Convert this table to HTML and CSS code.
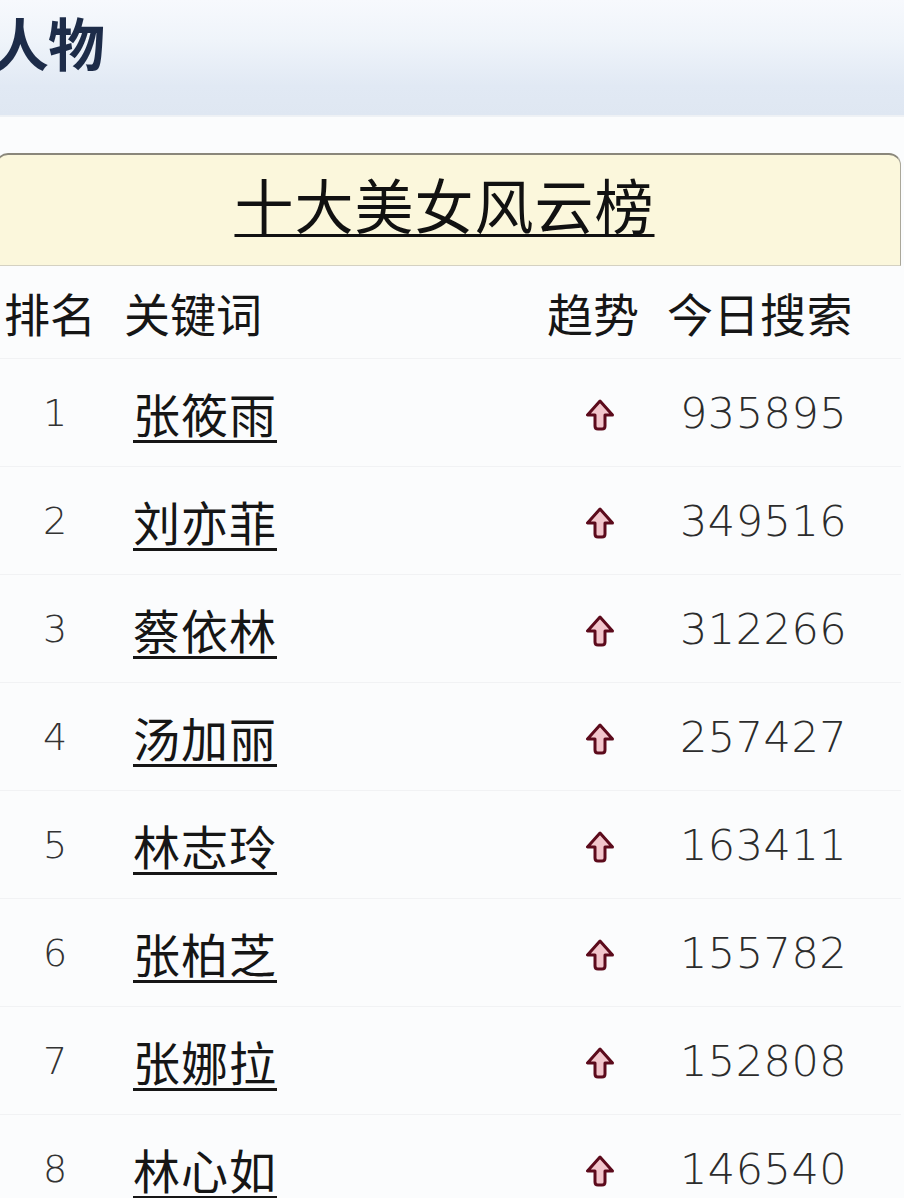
FILE: index.html
```html
<!DOCTYPE html>
<html lang="zh-CN">
<head>
<meta charset="utf-8">
<title>十大美女风云榜</title>
<link rel="stylesheet" href="styles.css">
</head>
<body>
<header class="topbar"><span class="topbar-title">人物</span></header>
<main class="card">
  <div class="card-head"><span class="card-title">十大美女风云榜</span></div>
  <div class="table">
    <div class="row head">
      <div class="c-rank">排名</div>
      <div class="c-name">关键词</div>
      <div class="c-trend">趋势</div>
      <div class="c-count">今日搜索</div>
    </div>
    <div class="row"><div class="c-rank">1</div><div class="c-name"><a class="kw">张筱雨</a></div><div class="c-trend"><svg class="up" viewBox="0 0 28 32"><path d="M14 2 L1.5 16 L9 16 L9 27 Q9 30 12 30 L16 30 Q19 30 19 27 L19 16 L26.5 16 Z"/></svg></div><div class="c-count">935895</div></div>
    <div class="row"><div class="c-rank">2</div><div class="c-name"><a class="kw">刘亦菲</a></div><div class="c-trend"><svg class="up" viewBox="0 0 28 32"><path d="M14 2 L1.5 16 L9 16 L9 27 Q9 30 12 30 L16 30 Q19 30 19 27 L19 16 L26.5 16 Z"/></svg></div><div class="c-count">349516</div></div>
    <div class="row"><div class="c-rank">3</div><div class="c-name"><a class="kw">蔡依林</a></div><div class="c-trend"><svg class="up" viewBox="0 0 28 32"><path d="M14 2 L1.5 16 L9 16 L9 27 Q9 30 12 30 L16 30 Q19 30 19 27 L19 16 L26.5 16 Z"/></svg></div><div class="c-count">312266</div></div>
    <div class="row"><div class="c-rank">4</div><div class="c-name"><a class="kw">汤加丽</a></div><div class="c-trend"><svg class="up" viewBox="0 0 28 32"><path d="M14 2 L1.5 16 L9 16 L9 27 Q9 30 12 30 L16 30 Q19 30 19 27 L19 16 L26.5 16 Z"/></svg></div><div class="c-count">257427</div></div>
    <div class="row"><div class="c-rank">5</div><div class="c-name"><a class="kw">林志玲</a></div><div class="c-trend"><svg class="up" viewBox="0 0 28 32"><path d="M14 2 L1.5 16 L9 16 L9 27 Q9 30 12 30 L16 30 Q19 30 19 27 L19 16 L26.5 16 Z"/></svg></div><div class="c-count">163411</div></div>
    <div class="row"><div class="c-rank">6</div><div class="c-name"><a class="kw">张柏芝</a></div><div class="c-trend"><svg class="up" viewBox="0 0 28 32"><path d="M14 2 L1.5 16 L9 16 L9 27 Q9 30 12 30 L16 30 Q19 30 19 27 L19 16 L26.5 16 Z"/></svg></div><div class="c-count">155782</div></div>
    <div class="row"><div class="c-rank">7</div><div class="c-name"><a class="kw">张娜拉</a></div><div class="c-trend"><svg class="up" viewBox="0 0 28 32"><path d="M14 2 L1.5 16 L9 16 L9 27 Q9 30 12 30 L16 30 Q19 30 19 27 L19 16 L26.5 16 Z"/></svg></div><div class="c-count">152808</div></div>
    <div class="row"><div class="c-rank">8</div><div class="c-name"><a class="kw">林心如</a></div><div class="c-trend"><svg class="up" viewBox="0 0 28 32"><path d="M14 2 L1.5 16 L9 16 L9 27 Q9 30 12 30 L16 30 Q19 30 19 27 L19 16 L26.5 16 Z"/></svg></div><div class="c-count">146540</div></div>
  </div>
</main>
</body>
</html>
```

FILE: styles.css
```css
html, body {
  margin: 0;
  padding: 0;
}
body {
  width: 904px;
  height: 1198px;
  overflow: hidden;
  background: #fbfcfd;
  font-family: "Noto Sans CJK SC", "Noto Sans", sans-serif;
  color: #151515;
}
.topbar {
  height: 117px;
  border-bottom: 2px solid #eef1f5;
  background: linear-gradient(180deg, #f7f9fd 0%, #eff4fa 35%, #e1e9f4 75%, #dfe7f2 100%);
  box-sizing: border-box;
  overflow: hidden;
}
.topbar-title {
  display: block;
  margin-left: -8px;
  padding-top: 6px;
  font-size: 57px;
  line-height: 70px;
  font-weight: 700;
  color: #1d2c49;
  letter-spacing: -1px;
}
.card {
  margin: 36px 3px 0 -4px;
}
.card-head {
  height: 113px;
  box-sizing: border-box;
  border-top: 2px solid #8a877b;
  border-left: 1px solid #c9c6b8;
  border-right: 1px solid #aaa79a;
  border-bottom: 1px solid #d4d1c2;
  border-radius: 12px 12px 0 0;
  background: #fbf7dc;
  display: flex;
  justify-content: center;
  align-items: flex-start;
  padding-right: 8px;
}
.card-title {
  font-size: 59px;
  line-height: 70px;
  margin-top: 14px;
  letter-spacing: 1px;
  color: #111;
  text-decoration: underline;
  text-decoration-thickness: 3px;
  text-underline-offset: 5px;
}
.table {
  display: flex;
  flex-direction: column;
  margin-left: 4px;
}
.row {
  display: grid;
  grid-template-columns: 120px 420px 120px 1fr;
  align-items: center;
  height: 108px;
  box-sizing: border-box;
  border-bottom: 1px solid #f1f2f4;
}
.row.head {
  height: 93px;
  font-size: 46px;
  color: #161616;
}
.row.head .c-rank { padding-left: 4px; text-align: left; }
.row.head .c-name { padding-left: 4px; }
.row.head .c-trend { padding-left: 7px; text-align: left; }
.row.head .c-count { padding-left: 7px; }
.c-rank {
  text-align: center;
  padding-right: 10px;
  font-family: "DejaVu Sans", sans-serif;
  font-weight: 200;
  font-size: 38px;
  color: #333;
}
.row.head .c-rank { font-family: "Noto Sans CJK SC", sans-serif; font-weight: 400; font-size: 46px; color: #161616; }
.c-name {
  padding-left: 13px;
}
.kw {
  font-size: 47px;
  line-height: 60px;
  color: #161616;
  text-decoration: underline;
  text-decoration-thickness: 3px;
  text-underline-offset: 7px;
  letter-spacing: 1px;
}
.c-trend {
  display: flex;
  justify-content: center;
  padding-top: 4px;
}
.row.head .c-trend { display: block; padding-top: 0; }
.up {
  width: 28px;
  height: 32px;
}
.up path {
  fill: #f2c6cc;
  stroke: #5c0b1c;
  stroke-width: 3;
  stroke-linejoin: round;
}
.c-count {
  padding-left: 20px;
  font-family: "DejaVu Sans", sans-serif;
  font-weight: 200;
  font-size: 43px;
  color: #2c2c2c;
  letter-spacing: 0.5px;
}
.row.head .c-count { font-family: "Noto Sans CJK SC", sans-serif; font-weight: 400; font-size: 46px; color: #161616; letter-spacing: 0.5px; }
```
